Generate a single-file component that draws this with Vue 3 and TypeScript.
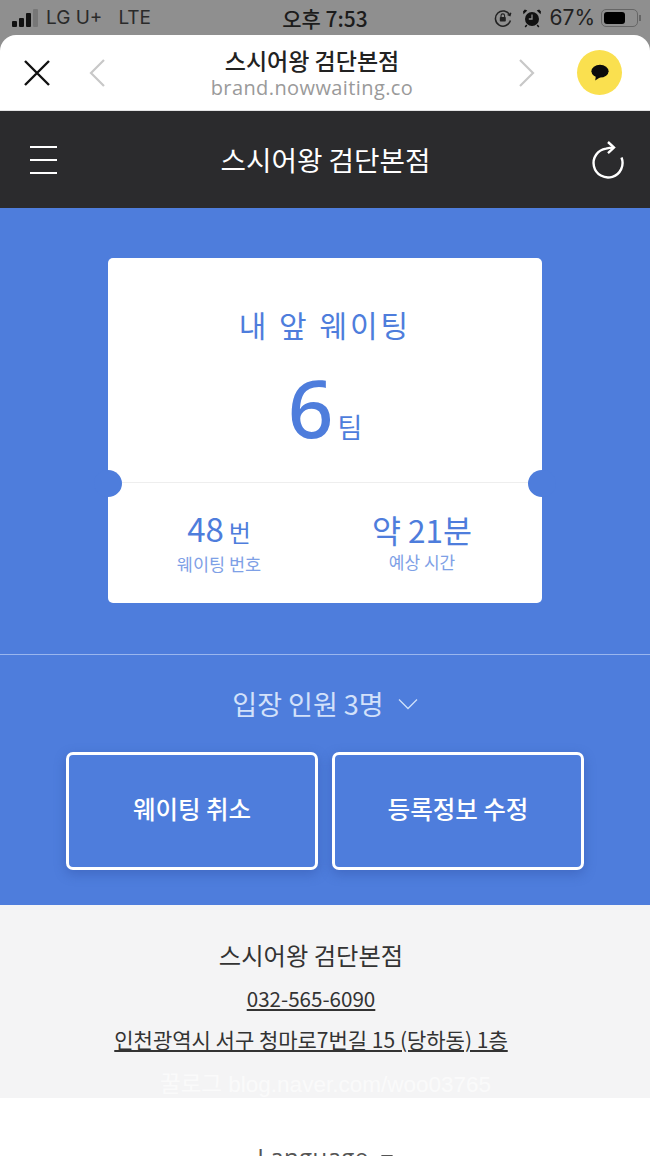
<script setup lang="ts">
const storeName = '스시어왕 검단본점'
const signalBars = [6, 9, 14, 18]
</script>

<template>
  <div class="page">
    <div class="status-bar">
      <div class="status-left">
        <div class="signal">
          <i v-for="(h, index) in signalBars" :key="index" :class="{ off: index === 3 }" :style="{ height: h + 'px' }"></i>
        </div>
        <span class="carrier">LG U+</span>
        <span class="carrier lte">LTE</span>
      </div>
      <div class="status-time">오후 7:53</div>
      <div class="status-right">
        <svg width="20" height="20" viewBox="0 0 20 20" fill="none" stroke="#222" stroke-width="1.5">
          <path d="M16.8 7A7.6 7.6 0 1 0 17.4 12.5" />
          <path d="M14.6 6.6l2.4 1 .8-2.8" stroke-width="1.3" />
          <rect x="6.8" y="9" width="6" height="4.6" rx=".8" fill="#222" stroke="none" />
          <path d="M8 9V7.7a1.8 1.8 0 0 1 3.6 0V9" stroke-width="1.1" />
        </svg>
        <svg class="alarm" width="20" height="20" viewBox="0 0 20 20">
          <circle cx="10" cy="11" r="7" fill="#111" />
          <path d="M10 6.5V11H6.8" fill="none" stroke="#8f8f8f" stroke-width="1.3" />
          <path d="M1.5 6.2 5.3 2.4 2.8 1.6 1 3.6zM18.5 6.2 14.7 2.4l2.5-.8L19 3.6z" fill="#111" />
          <path d="M4.8 17l-1.6 2M15.2 17l1.6 2" stroke="#111" stroke-width="1.5" />
        </svg>
        <span class="percent">67%</span>
        <div class="battery"><div class="battery-fill"></div></div>
        <div class="battery-tip"></div>
      </div>
    </div>

    <div class="sheet">
      <div class="browser-bar">
        <svg class="close" width="28" height="28" viewBox="0 0 28 28">
          <path d="M2 2l24 24M26 2 2 26" stroke="#111" stroke-width="2.4" fill="none" />
        </svg>
        <svg class="nav prev" width="18" height="30" viewBox="0 0 18 30">
          <path d="M16 2 3 15l13 13" stroke="#c8c8c8" stroke-width="2.2" fill="none" />
        </svg>
        <div class="browser-title">
          <div class="browser-name">{{ storeName }}</div>
          <div class="browser-url">brand.nowwaiting.co</div>
        </div>
        <svg class="nav next" width="18" height="30" viewBox="0 0 18 30">
          <path d="M2 2l13 13L2 28" stroke="#c8c8c8" stroke-width="2.2" fill="none" />
        </svg>
        <div class="kakao">
          <svg width="20" height="18" viewBox="0 0 20 18">
            <ellipse cx="10" cy="7.2" rx="8.6" ry="6.4" fill="#0b0b0b" />
            <path d="M6 11l-.8 5.4L10.6 13z" fill="#0b0b0b" />
          </svg>
        </div>
      </div>

      <header class="app-bar">
        <div class="menu"><i></i><i></i><i></i></div>
        <div class="app-title">{{ storeName }}</div>
        <svg class="refresh" width="36" height="40" viewBox="0 0 36 40" fill="none" stroke="#fff" stroke-width="2.4">
          <path d="M31.5 17.5A14.5 14.5 0 1 1 16 8.6C18 8 21 7.6 24 7.6" />
          <path d="M18 2l6 5.6-6 5.6" />
        </svg>
      </header>

      <main class="waiting">
        <section class="ticket">
          <div class="ticket-top">
            <div class="ticket-label">내 앞 웨이팅</div>
            <div class="ticket-count"><span class="count-num">6</span><span class="count-unit">팀</span></div>
          </div>
          <div class="ticket-bottom">
            <div class="ticket-col">
              <div class="col-value">48<span class="col-unit">번</span></div>
              <div class="col-label">웨이팅 번호</div>
            </div>
            <div class="ticket-col time">
              <div class="col-value">약 21분</div>
              <div class="col-label">예상 시간</div>
            </div>
          </div>
          <i class="notch left"></i>
          <i class="notch right"></i>
        </section>

        <div class="party">
          <span>입장 인원 3명</span>
          <svg width="20" height="12" viewBox="0 0 20 12">
            <path d="M1 1.5l9 9 9-9" stroke="#cfe0fa" stroke-width="1.3" fill="none" />
          </svg>
        </div>
        <div class="actions">
          <button class="action">웨이팅 취소</button>
          <button class="action">등록정보 수정</button>
        </div>
      </main>

      <section class="info">
        <div class="info-name">{{ storeName }}</div>
        <a class="info-link phone">032-565-6090</a>
        <a class="info-link addr">인천광역시 서구 청마로7번길 15 (당하동) 1층</a>
        <div class="watermark">꿀로그 blog.naver.com/woo03765</div>
      </section>

      <footer class="language"><span>Language</span><i class="lang-caret"></i></footer>
    </div>
  </div>
</template>

<style>
html, body {
  margin: 0;
  height: 100%;
  overflow: hidden;
}
</style>

<style scoped>
.page {
  width: 650px;
  height: 1156px;
  overflow: hidden;
  background: #8f8f8f;
  font-family: "Noto Sans CJK KR", "Noto Sans", sans-serif;
}

.status-bar {
  height: 35px;
  display: grid;
  grid-template-columns: 1fr auto 1fr;
  align-items: center;
  padding: 0 9px 0 12px;
  color: #222;
  box-sizing: border-box;
}
.status-left, .status-right {
  display: flex;
  align-items: center;
}
.status-right {
  justify-content: flex-end;
}
.signal {
  display: flex;
  align-items: flex-end;
  gap: 2px;
  margin-right: 8px;
}
.signal i {
  width: 5px;
  background: #111;
  border-radius: 1px;
}
.signal i.off {
  background: #777;
}
.carrier {
  font: 19px "Inter", sans-serif;
  color: #2a2a2a;
}
.lte {
  margin-left: 16px;
}
.status-time {
  font: 500 21px "Noto Sans CJK KR", sans-serif;
  color: #1c1c1c;
  margin-left: -3px;
}
.alarm {
  margin-left: 9px;
}
.percent {
  font: 21px "Inter", sans-serif;
  margin-left: 7px;
  color: #222;
}
.battery {
  width: 37px;
  height: 18px;
  border: 1px solid #666;
  border-radius: 5px;
  margin-left: 6px;
  padding: 2px;
  box-sizing: border-box;
}
.battery-fill {
  width: 21px;
  height: 100%;
  background: #000;
  border-radius: 3px;
}
.battery-tip {
  width: 2px;
  height: 6px;
  margin-left: 1px;
  background: #666;
}

.sheet {
  background: #fff;
  border-radius: 16px 16px 0 0;
  overflow: hidden;
}

.browser-bar {
  height: 75px;
  display: flex;
  align-items: center;
}
.close {
  margin-left: 23px;
  flex: none;
}
.prev {
  margin-left: 37px;
  flex: none;
}
.browser-title {
  flex: 1;
  text-align: center;
}
.browser-name {
  font-size: 23px;
  font-weight: 500;
  line-height: 30px;
  color: #222;
}
.browser-url {
  font: 20px/25px "Open Sans", sans-serif;
  color: #9a9a9a;
  letter-spacing: .4px;
}
.next {
  flex: none;
}
.kakao {
  width: 45px;
  height: 45px;
  margin: 0 28px 0 41px;
  border-radius: 50%;
  background: #fae04f;
  display: flex;
  align-items: center;
  justify-content: center;
  flex: none;
}

.app-bar {
  height: 98px;
  background: #2b2b2d;
  border-top: 1px solid #e4e4e4;
  box-sizing: border-box;
  display: flex;
  align-items: center;
  justify-content: space-between;
  padding: 0 24px 0 30px;
}
.menu {
  width: 27px;
  display: flex;
  flex-direction: column;
  gap: 11px;
}
.menu i {
  height: 2px;
  background: #fff;
}
.app-title {
  color: #fff;
  font-size: 27.7px;
  font-weight: 400;
  margin-left: 4px;
  padding-bottom: 2px;
}

.waiting {
  background: #4e7ddc;
  height: 697px;
  padding-top: 50px;
  box-sizing: border-box;
}
.ticket {
  width: 434px;
  height: 345px;
  margin: 0 auto;
  background: #fff;
  border-radius: 5px;
  position: relative;
  color: #4e7ddc;
  display: flex;
  flex-direction: column;
}
.ticket-top {
  height: 225px;
  border-bottom: 1px solid #eeeeee;
  box-sizing: border-box;
  text-align: center;
  padding-top: 44px;
}
.ticket-label {
  font-size: 30px;
  line-height: 44px;
  letter-spacing: 3px;
}
.ticket-count {
  display: flex;
  justify-content: center;
  align-items: baseline;
  margin-top: 9px;
}
.count-num {
  font: 500 80px/104px "Noto Sans", sans-serif;
}
.count-unit {
  font-size: 27px;
  margin-left: 4px;
}
.ticket-bottom {
  display: grid;
  grid-template-columns: 222px 1fr;
  text-align: center;
  padding-top: 26px;
}
.time {
  padding-right: 28px;
}
.col-value {
  font-size: 33px;
  line-height: 39px;
}
.time .col-value {
  font-size: 31.5px;
  line-height: 40px;
}
.col-unit {
  font-size: 24px;
  margin-left: 5px;
}
.col-label {
  font-size: 17.5px;
  line-height: 26px;
  color: #7ea0e6;
}
.time .col-label {
  font-size: 17px;
  line-height: 26px;
}
.notch {
  position: absolute;
  top: 212px;
  width: 28px;
  height: 27px;
  border-radius: 50%;
  background: #4e7ddc;
}
.notch.left {
  left: -14px;
}
.notch.right {
  right: -14px;
}

.party {
  margin-top: 51px;
  border-top: 1px solid #9ab6ee;
  padding-top: 29px;
  display: flex;
  justify-content: center;
  align-items: center;
  gap: 14px;
  font-size: 27px;
  line-height: 40px;
  color: #d3e1fa;
}
.actions {
  display: flex;
  justify-content: center;
  gap: 14px;
  margin-top: 28px;
}
.action {
  width: 252px;
  height: 118px;
  padding: 0 0 5px;
  background: #4e7ddc;
  border: 3px solid #fff;
  border-radius: 7px;
  color: #fff;
  font: 500 24.5px "Noto Sans CJK KR", sans-serif;
  box-shadow: 0 4px 12px rgba(40, 70, 150, 0.35);
}

.info {
  height: 193px;
  background: #f4f4f5;
  text-align: center;
  color: #333;
  position: relative;
  padding: 30px 28px 0 0;
  box-sizing: border-box;
}
.info-name {
  font-size: 24.3px;
  line-height: 40px;
}
.info-link {
  display: block;
  font-size: 21px;
  text-decoration: underline;
  text-underline-offset: 2px;
  color: #333;
  line-height: 41px;
}
.phone {
  font-size: 20.6px;
  margin-top: 3px;
}
.watermark {
  position: absolute;
  left: 1px;
  right: 0;
  top: 161px;
  font: 22.5px "Liberation Sans", "Noto Sans CJK KR", sans-serif;
  color: rgba(255, 255, 255, 0.6);
}

.language {
  display: flex;
  justify-content: center;
  align-items: center;
  gap: 12px;
  font: 24px "Open Sans", sans-serif;
  letter-spacing: .4px;
  padding-top: 42px;
  color: #555;
}
.lang-caret {
  width: 0;
  height: 0;
  margin-top: 4px;
  border-left: 6px solid transparent;
  border-right: 6px solid transparent;
  border-top: 8px solid #555;
}
</style>
